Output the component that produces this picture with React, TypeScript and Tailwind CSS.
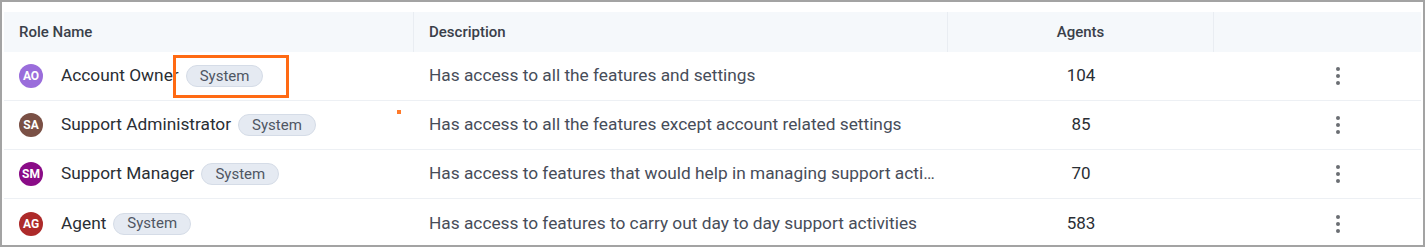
const roles = [
  { initials: 'AO', name: 'Account Owner', color: 'bg-[#9a6ddb]', description: 'Has access to all the features and settings', agents: 104 },
  { initials: 'SA', name: 'Support Administrator', color: 'bg-[#7a5045]', description: 'Has access to all the features except account related settings', agents: 85 },
  { initials: 'SM', name: 'Support Manager', color: 'bg-[#8a0c87]', description: 'Has access to features that would help in managing support activities and team performance', agents: 70 },
  { initials: 'AG', name: 'Agent', color: 'bg-[#ad2a2a]', description: 'Has access to features to carry out day to day support activities', agents: 583 },
];

function KebabIcon() {
  return (
    <svg width="6" height="20" viewBox="0 0 6 20" className="text-[#6b6e73]">
      <circle cx="3" cy="3" r="2" fill="currentColor" />
      <circle cx="3" cy="10" r="2" fill="currentColor" />
      <circle cx="3" cy="17" r="2" fill="currentColor" />
    </svg>
  );
}

export default function App() {
  return (
    <div
      className="relative w-[1425px] h-[247px] overflow-hidden border-2 border-[#a3a3a3] bg-white pt-[10px] pl-[2px] pr-[1px]"
      style={{ fontFamily: 'Roboto, "Liberation Sans", sans-serif' }}
    >
      <div className="w-[1417px]">
        <div className="grid grid-cols-[410px_534px_266px_1fr] h-[40px] bg-[#f5f8fb] text-[15px] font-medium text-[#3a404a]">
          <div className="flex items-center pl-[15px] border-r border-[#e9edf2]">Role Name</div>
          <div className="flex items-center pl-[15px] border-r border-[#e9edf2]">Description</div>
          <div className="flex items-center justify-center border-r border-[#e9edf2]">Agents</div>
          <div />
        </div>

        {roles.map((r, i) => (
          <div
            key={r.initials}
            className={`grid grid-cols-[410px_534px_266px_1fr] h-[49px] ${i < roles.length - 1 ? 'border-b border-[#edf0f4]' : ''}`}
          >
            <div className="flex items-center pl-[15px]">
              <div className={`w-[24px] h-[24px] rounded-full ${r.color} flex items-center justify-center text-white text-[12px] font-bold`}>
                {r.initials}
              </div>
              <span className="ml-[18px] text-[17.3px] text-[#2a2e34]">{r.name}</span>
              <span className="ml-[7px] h-[22px] px-[13px] rounded-full bg-[#e5eaf2] border border-[#d5dce7] text-[15px] text-[#4f5663] flex items-center">
                System
              </span>
            </div>
            <div className="flex items-center pl-[15px] pr-[12px] min-w-0 overflow-hidden">
              <span className="block w-full truncate text-[17.3px] text-[#474d59]">{r.description}</span>
            </div>
            <div className="flex items-center justify-center text-[17px] text-[#2a2e34]">{r.agents}</div>
            <div className="flex items-center pl-[121px]">
              <KebabIcon />
            </div>
          </div>
        ))}
      </div>

      <div className="absolute left-[171px] top-[53px] w-[116px] h-[43px] border-[3px] border-[#ff6a13]" />
      <div className="absolute left-[395px] top-[108px] w-[4px] h-[4px] bg-[#ff7a2a]" />
    </div>
  );
}
